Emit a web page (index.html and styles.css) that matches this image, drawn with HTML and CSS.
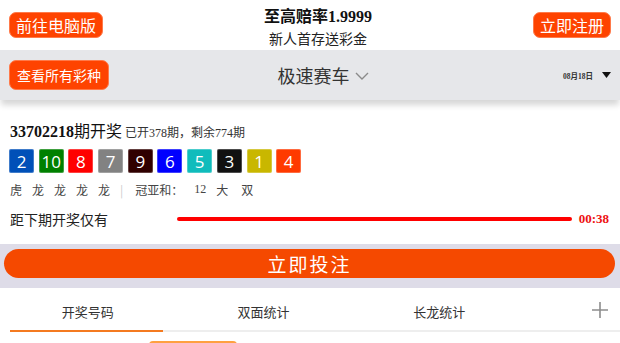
FILE: index.html
```html
<!DOCTYPE html>
<html lang="zh">
<head>
<meta charset="utf-8">
<link rel="stylesheet" href="styles.css">
</head>
<body>
<header class="top">
  <a class="btn">前往电脑版</a>
  <div class="promo">
    <div class="promo-title">至高赔率<span class="num">1.9999</span></div>
    <div class="promo-sub">新人首存送彩金</div>
  </div>
  <a class="btn">立即注册</a>
</header>
<nav class="bar">
  <a class="btn btn-small">查看所有彩种</a>
  <div class="game">极速赛车<svg class="chev" width="14" height="8" viewBox="0 0 14 8"><polyline points="1,1 7,7 13,1" fill="none" stroke="#8a8a8a" stroke-width="1.4"/></svg></div>
  <div class="date"><span>08月18日</span><svg width="9" height="6" viewBox="0 0 9 6"><polygon points="0,0 9,0 4.5,6" fill="#111"/></svg></div>
</nav>
<main class="draw">
  <div class="issue"><b class="num">33702218</b>期开奖<span class="issue-sub">已开<span class="num">378</span>期，剩余<span class="num">774</span>期</span></div>
  <div class="balls">
    <span class="ball c2">2</span><span class="ball c10">10</span><span class="ball c8">8</span><span class="ball c7">7</span><span class="ball c9">9</span><span class="ball c6">6</span><span class="ball c5">5</span><span class="ball c3">3</span><span class="ball c1">1</span><span class="ball c4">4</span>
  </div>
  <div class="stats">
    <span class="lh">虎</span><span class="lh">龙</span><span class="lh">龙</span><span class="lh">龙</span><span class="lh">龙</span><span class="sep">|</span><span class="gyh">冠亚和：</span><span class="num sum">12</span><span class="big">大</span><span class="even">双</span>
  </div>
  <div class="count">
    <span class="count-label">距下期开奖仅有</span>
    <span class="progress"></span>
    <b class="num time">00:38</b>
  </div>
</main>
<section class="bet">
  <a class="bet-btn">立即投注</a>
</section>
<div class="tabs">
  <div class="tab-list">
    <div class="tab active">开奖号码</div>
    <div class="tab">双面统计</div>
    <div class="tab">长龙统计</div>
  </div>
  <div class="plus"><svg width="16" height="16" viewBox="0 0 16 16"><path d="M8 0V16M0 8H16" stroke="#8d8d8d" stroke-width="1.6"/></svg></div>
</div>
<div class="below"><span class="chip"></span></div>
</body>
</html>
```
FILE: styles.css
```css
* { box-sizing: border-box; }
body {
  margin: 0;
  background: #fff;
  font-family: "Noto Sans CJK SC", "Noto Sans", sans-serif;
  color: #222;
  width: 620px;
  overflow: hidden;
}
.num { font-family: "Liberation Serif", "Noto Sans CJK SC", serif; }
.top {
  height: 50px;
  display: flex;
  justify-content: space-between;
  align-items: flex-start;
  padding: 0 9px;
  background: #fff;
}
.btn {
  display: inline-flex;
  align-items: center;
  height: 26px;
  margin-top: 12px;
  padding: 0 6px;
  background: #fe4300;
  color: #fff;
  font-size: 16px;
  border-radius: 7px;
  border: 1px solid #ff7a4a;
  line-height: 1;
}
.btn-small {
  height: 30px;
  margin-top: 0;
  padding: 0 7px;
  font-size: 14px;
}
.promo { text-align: center; padding-top: 5px; }
.promo-title { font-size: 16px; font-weight: bold; line-height: 20px; color: #111; }
.promo-sub { font-size: 14px; line-height: 20px; margin-top: 1px; color: #222; }
.bar {
  height: 50px;
  background: #e6e7ea;
  display: flex;
  justify-content: space-between;
  align-items: center;
  padding: 0 9px;
  box-shadow: 0 6px 6px -1px rgba(0,0,0,0.16);
  position: relative;
}
.game {
  font-size: 18px;
  color: #333;
  display: flex;
  align-items: center;
  gap: 5px;
}
.chev { margin-top: 2px; }
.date {
  width: 74px;
  display: flex;
  justify-content: flex-end;
  align-items: center;
  gap: 9px;
  font-family: "Liberation Serif", "Noto Sans CJK SC", serif;
  font-size: 7.5px;
  font-weight: bold;
  color: #333;
}
.draw { padding: 20px 10px 0 10px; height: 144px; }
.issue { font-size: 16px; line-height: 20px; color: #111; }
.issue-sub { font-size: 12px; color: #333; margin-left: 3px; }
.balls { display: flex; gap: 4.7px; margin: 6px 0 0 -1px; }
.ball {
  width: 25px;
  height: 24px;
  border-radius: 2px;
  color: #fff;
  font-family: "Open Sans", "DejaVu Sans", sans-serif;
  font-size: 17px;
  display: flex;
  align-items: center;
  justify-content: center;
  box-shadow: inset 0 0 0 1px rgba(255,255,255,0.25);
}
.c1 { background: #c9b700; }
.c2 { background: #0050b8; }
.c3 { background: #111; }
.c4 { background: #ff3a00; }
.c5 { background: #10bcbc; }
.c6 { background: #0000ff; }
.c7 { background: #828282; }
.c8 { background: #ff0000; }
.c9 { background: #300000; }
.c10 { background: #008000; }
.stats {
  display: flex;
  align-items: center;
  font-size: 12px;
  color: #444;
  margin-top: 8px;
  height: 16px;
}
.lh { margin-right: 10px; }
.sep { color: #ccc; margin: 0 12px 0 0; font-size: 12px; }
.gyh { margin-right: 11px; }
.sum { margin-right: 10px; font-size: 12px; }
.big { margin-right: 13px; }
.count {
  display: flex;
  align-items: center;
  margin-top: 12px;
  height: 20px;
}
.count-label { width: 167px; font-size: 14px; color: #222; }
.progress {
  flex: 1;
  height: 4px;
  background: #ff0000;
  border-radius: 2px;
}
.time { color: #ee1111; font-size: 13px; margin: 0 1px 0 7px; }
.bet {
  background: #dedce8;
  padding: 5px 5px 10px 4px;
}
.bet-btn {
  display: flex;
  align-items: center;
  justify-content: center;
  height: 29px;
  background: #f54900;
  border-radius: 15px;
  color: #fff;
  font-size: 19px;
  letter-spacing: 2px;
}
.tabs {
  display: flex;
  height: 44px;
  background: linear-gradient(#eeeeee, #eeeeee) no-repeat 0 100% / 100% 2px;
}
.tab-list { display: flex; width: 527px; }
.tab {
  flex: 1;
  display: flex;
  align-items: center;
  justify-content: center;
  font-size: 13px;
  color: #333;
  padding-top: 2px;
}
.tab.active {
  background: linear-gradient(to right, #fff 10px, #f47a20 10px, #f47a20 163px, transparent 163px) no-repeat 0 100% / 100% 2px;
}
.plus { flex: 1; display: flex; align-items: center; justify-content: flex-end; padding-right: 12px; }
.below { height: 20px; padding: 9px 0 0 149px; }
.chip { display: block; width: 88px; height: 10px; border-top: 2px solid #ffa040; border-radius: 4px 4px 0 0; }
```
